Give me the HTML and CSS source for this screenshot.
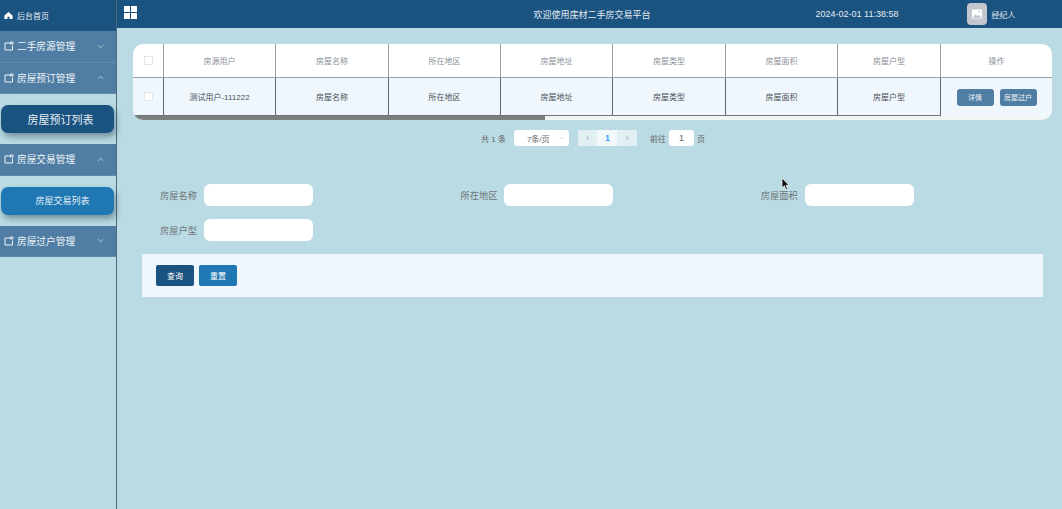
FILE: index.html
```html
<!DOCTYPE html>
<html lang="zh-CN">
<head>
    <meta charset="UTF-8">
    <title>二手房交易平台</title>
    <link rel="stylesheet" href="styles.css">
</head>
<body>
    <div class="app">
        <div class="side">
            <div class="side-home">
                <svg class="home-ico" viewBox="0 0 10 10"><path d="M5 1 L9.5 5 V9 H6.2 V6.4 H3.8 V9 H.5 V5 Z" fill="#fff"/></svg>
                <span>后台首页</span>
            </div>
            <div class="side-menu">
                <svg class="menu-ico" viewBox="0 0 10 10"><path d="M6 2 H1 V9 H8.5 V4.5 M6.5 1 H9 V3 H6.5 Z" fill="none" stroke="#fff" stroke-width=".9"/></svg>
                <span>二手房源管理</span>
                <svg class="arrow" viewBox="0 0 8 5"><path d="M1 1 L4 4 L7 1" fill="none" stroke="#cfe0ec" stroke-width=".9"/></svg>
            </div>
            <div class="side-menu">
                <svg class="menu-ico" viewBox="0 0 10 10"><path d="M6 2 H1 V9 H8.5 V4.5 M6.5 1 H9 V3 H6.5 Z" fill="none" stroke="#fff" stroke-width=".9"/></svg>
                <span>房屋预订管理</span>
                <svg class="arrow" viewBox="0 0 8 5"><path d="M1 4 L4 1 L7 4" fill="none" stroke="#cfe0ec" stroke-width=".9"/></svg>
            </div>
            <div class="side-sub">
                <div class="sub-item sub-dark">房屋预订列表</div>
            </div>
            <div class="side-menu">
                <svg class="menu-ico" viewBox="0 0 10 10"><path d="M6 2 H1 V9 H8.5 V4.5 M6.5 1 H9 V3 H6.5 Z" fill="none" stroke="#fff" stroke-width=".9"/></svg>
                <span>房屋交易管理</span>
                <svg class="arrow" viewBox="0 0 8 5"><path d="M1 4 L4 1 L7 4" fill="none" stroke="#cfe0ec" stroke-width=".9"/></svg>
            </div>
            <div class="side-sub">
                <div class="sub-item sub-blue">房屋交易列表</div>
            </div>
            <div class="side-menu">
                <svg class="menu-ico" viewBox="0 0 10 10"><path d="M6 2 H1 V9 H8.5 V4.5 M6.5 1 H9 V3 H6.5 Z" fill="none" stroke="#fff" stroke-width=".9"/></svg>
                <span>房屋过户管理</span>
                <svg class="arrow" viewBox="0 0 8 5"><path d="M1 1 L4 4 L7 1" fill="none" stroke="#cfe0ec" stroke-width=".9"/></svg>
            </div>
        </div>

        <div class="main">
            <div class="top-bar">
                <div class="grid-ico"><i></i><i></i><i></i><i></i></div>
                <div class="top-title">欢迎使用庑材二手房交易平台</div>
                <div class="top-time">2024-02-01 11:38:58</div>
                <div class="avatar">
                    <svg viewBox="0 0 12 12"><rect x="1" y="1.5" width="10" height="9" fill="#fff"/><path d="M1.5 10 L4.5 6 L6.5 8 L8 6.8 L10.5 10 Z" fill="#c3c8d0"/><circle cx="8.3" cy="3.8" r="1" fill="#c3c8d0"/></svg>
                </div>
                <div class="top-user">经纪人</div>
            </div>

            <div class="content">
                <div class="table-box">
                    <div class="tb-row tb-head">
                        <div class="cell"><span class="check"></span></div>
                        <div class="cell">房源用户</div>
                        <div class="cell">房屋名称</div>
                        <div class="cell">所在地区</div>
                        <div class="cell">房屋地址</div>
                        <div class="cell">房屋类型</div>
                        <div class="cell">房屋面积</div>
                        <div class="cell">房屋户型</div>
                        <div class="cell">操作</div>
                    </div>
                    <div class="tb-row tb-body">
                        <div class="cell"><span class="check"></span></div>
                        <div class="cell">测试用户-111222</div>
                        <div class="cell">房屋名称</div>
                        <div class="cell">所在地区</div>
                        <div class="cell">房屋地址</div>
                        <div class="cell">房屋类型</div>
                        <div class="cell">房屋面积</div>
                        <div class="cell">房屋户型</div>
                        <div class="cell ops">
                            <button class="op-btn">详情</button>
                            <button class="op-btn">房屋过户</button>
                        </div>
                    </div>
                    <div class="scroll-bar"><div class="scroll-thumb"></div></div>
                </div>

                <div class="pager">
                    <span>共 1 条</span>
                    <div class="pg-size"><span>7条/页</span><svg viewBox="0 0 8 5"><path d="M1 1 L4 4 L7 1" fill="none" stroke="#c0c4cc" stroke-width=".8"/></svg></div>
                    <div class="pg-nums">
                        <div class="pg-arrow">‹</div>
                        <div class="pg-cur">1</div>
                        <div class="pg-arrow">›</div>
                    </div>
                    <span class="pg-goto">前往</span>
                    <div class="pg-input">1</div>
                    <span>页</span>
                </div>

                <div class="search-form">
                    <div class="form-item"><label>房屋名称</label><div class="fake-input"></div></div>
                    <div class="form-item"><label>所在地区</label><div class="fake-input"></div></div>
                    <div class="form-item"><label>房屋面积</label><div class="fake-input"></div></div>
                    <div class="form-item"><label>房屋户型</label><div class="fake-input"></div></div>
                </div>

                <div class="action-bar">
                    <button class="act-btn act-dark">查询</button>
                    <button class="act-btn act-blue">重置</button>
                </div>
            </div>
        </div>
    </div>
    <svg class="cursor" viewBox="0 0 10 14"><path d="M1 1 V11 L3.4 8.8 L5 12.5 L6.6 11.8 L5 8.3 H8 Z" fill="#111" stroke="#fff" stroke-width=".7"/></svg>
</body>
</html>
```
FILE: styles.css
```css
body {
    margin: 0;
    background-color: #bbdbe4;
    font-family: "Liberation Sans", "Noto Sans CJK SC", sans-serif;
    overflow: hidden;
}
.app {
    display: flex;
    height: 509px;
}

/* sidebar */
.side {
    width: 116px;
    flex: none;
    border-right: 1px solid #4d6878;
}
.side-home {
    height: 31px;
    background-color: #1a5280;
    color: #e8eef3;
    font-size: 8px;
    display: flex;
    align-items: center;
    padding-left: 4px;
    gap: 4px;
}
.home-ico {
    width: 9px;
    height: 9px;
}
.side-menu {
    height: 31.5px;
    background-color: #4f7da3;
    color: #f0f5f8;
    font-size: 9.7px;
    display: flex;
    align-items: center;
    padding-left: 4px;
    box-sizing: border-box;
    border-bottom: 1px solid #5f8bad;
}
.menu-ico {
    width: 10px;
    height: 10px;
    margin-right: 3px;
}
.arrow {
    width: 7px;
    height: 5px;
    margin-left: 22px;
}
.side-sub {
    padding: 11px 2px 11px 1px;
}
.sub-item {
    height: 28px;
    border-radius: 7px;
    color: #e6eff5;
    display: flex;
    align-items: center;
    justify-content: center;
    box-shadow: 2px 4px 6px rgba(30, 60, 80, 0.45);
}
.sub-dark {
    background-color: #1a5280;
    font-size: 11px;
    padding-left: 6px;
}
.sub-blue {
    background-color: #1f78b4;
    font-size: 9px;
    padding-left: 10px;
}

/* top bar */
.main {
    flex: 1;
    min-width: 0;
}
.top-bar {
    height: 28px;
    background-color: #1a5280;
    color: #e4ebf1;
    display: flex;
    align-items: center;
    font-size: 9px;
}
.grid-ico {
    display: grid;
    grid-template-columns: 5.5px 5.5px;
    gap: 1.5px;
    margin-left: 7px;
    margin-bottom: 3px;
}
.grid-ico i {
    height: 5.5px;
    background-color: #fff;
}
.top-title {
    margin-left: 397px;
    width: 117px;
    white-space: nowrap;
}
.top-time {
    margin-left: 165px;
    width: 84px;
}
.avatar {
    width: 20px;
    height: 22px;
    margin-left: 67px;
    background-color: #c3c8d0;
    border-radius: 4px;
    display: flex;
    align-items: center;
    justify-content: center;
}
.avatar svg {
    width: 12px;
    height: 12px;
}
.top-user {
    margin-left: 5px;
    font-size: 8px;
}

/* table */
.content {
    padding: 16px 10px 0 16px;
}
.table-box {
    width: 919px;
    border-radius: 10px;
    overflow: hidden;
    font-size: 8px;
}
.tb-row {
    display: grid;
    grid-template-columns: 31px 112px 113px 112px 112px 113px 112px 103px 111px;
}
.tb-head {
    height: 33px;
    background-color: #fff;
    color: #8a8f96;
    border-bottom: 1px solid #9aa3aa;
}
.tb-body {
    height: 38px;
    background-color: #eff7fd;
    color: #4a4f55;
}
.cell {
    display: flex;
    align-items: center;
    justify-content: center;
    border-right: 1px solid #9aa0a8;
    box-sizing: border-box;
}
.tb-body .cell {
    border-right-color: #5d6670;
    border-bottom: 1px solid #6e767d;
}
.cell:last-child,
.tb-body .cell:last-child {
    border-right: none;
    border-bottom: none;
}
.check {
    width: 7px;
    height: 7px;
    border: 1px solid #e3e6ea;
    background-color: #fff;
}
.ops {
    gap: 6px;
    color: #fff;
}
.op-btn {
    height: 17px;
    width: 37px;
    border: none;
    padding: 0;
    border-radius: 3px;
    background-color: #4f7da3;
    color: #eef3f7;
    font-family: inherit;
    font-size: 7px;
}
.scroll-bar {
    height: 4px;
    background-color: #f1f5f3;
}
.scroll-thumb {
    width: 412px;
    height: 4px;
    background-color: #7b7f80;
}

/* pagination */
.pager {
    display: flex;
    align-items: center;
    height: 16px;
    margin-top: 10px;
    margin-left: 348px;
    font-size: 8px;
    color: #666;
    white-space: nowrap;
}
.pg-size {
    width: 55px;
    height: 16px;
    margin-left: 8px;
    background-color: #fff;
    border-radius: 3px;
    display: flex;
    align-items: center;
    justify-content: space-between;
    padding: 0 4px 0 13px;
    box-sizing: border-box;
}
.pg-size svg {
    width: 6px;
    height: 4px;
}
.pg-nums {
    display: flex;
    margin-left: 9px;
    height: 16px;
}
.pg-arrow {
    width: 19.5px;
    background-color: #e2eff3;
    color: #a8b4bb;
    font-size: 10px;
    line-height: 15px;
    text-align: center;
}
.pg-cur {
    width: 20px;
    background-color: #f3f8fb;
    color: #409eff;
    font-size: 9px;
    font-weight: bold;
    line-height: 16px;
    text-align: center;
}
.pg-goto {
    margin-left: 13px;
}
.pg-input {
    width: 25px;
    height: 16px;
    margin: 0 3px;
    background-color: #fff;
    border-radius: 3px;
    font-size: 9px;
    line-height: 16px;
    text-align: center;
}

/* search */
.search-form {
    display: grid;
    grid-template-columns: repeat(3, 300.4px);
    row-gap: 13px;
    margin: 38px 0 0 9px;
}
.form-item {
    display: flex;
    align-items: center;
}
.form-item label {
    width: 55px;
    margin-right: 7px;
    font-size: 9.25px;
    color: #6d7378;
    text-align: right;
}
.fake-input {
    width: 109px;
    height: 22px;
    background-color: #fff;
    border-radius: 6px;
}
.action-bar {
    display: flex;
    gap: 5px;
    width: 901px;
    height: 43px;
    margin: 13px 0 0 9px;
    padding: 11px 14px 0;
    box-sizing: border-box;
    background-color: #eff7fd;
}
.act-btn {
    width: 38px;
    height: 21px;
    border: none;
    padding: 0;
    border-radius: 2px;
    color: #fff;
    font-family: inherit;
    font-size: 8px;
}
.act-dark {
    background-color: #1a5280;
}
.act-blue {
    background-color: #1f78b4;
}

.cursor {
    position: absolute;
    left: 781px;
    top: 177px;
    width: 10px;
    height: 14px;
}
```
